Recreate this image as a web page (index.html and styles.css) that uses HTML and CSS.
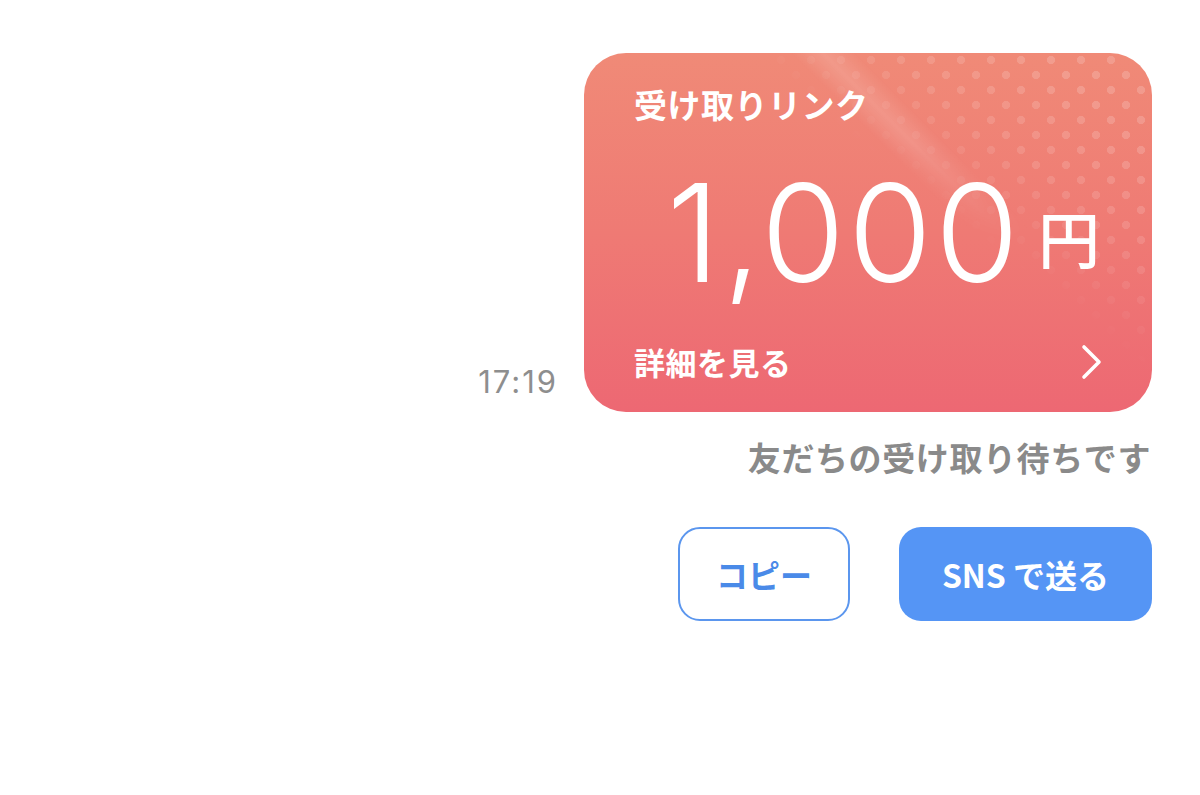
FILE: index.html
```html
<!DOCTYPE html>
<html lang="ja">
<head>
<meta charset="utf-8">
<link rel="stylesheet" href="styles.css">
</head>
<body>
<main class="thread">
  <div class="msg-row">
    <span class="time">17:19</span>
    <div class="card">
      <div class="card-dots"></div>
      <div class="card-shine"></div>
      <div class="card-title">受け取りリンク</div>
      <div class="card-amount">
        <span class="amount-num">1,000</span>
        <span class="amount-unit">円</span>
      </div>
      <div class="card-footer">
        <span class="footer-label">詳細を見る</span>
        <svg class="chevron" width="24" height="36" viewBox="0 0 24 36">
          <polyline points="4,3 19,18 4,33" fill="none" stroke="#fff" stroke-width="3.6" stroke-linecap="round" stroke-linejoin="round"/>
        </svg>
      </div>
    </div>
  </div>
  <div class="status">友だちの受け取り待ちです</div>
  <div class="actions">
    <button class="btn btn-outline">コピー</button>
    <button class="btn btn-fill">SNS で送る</button>
  </div>
</main>
</body>
</html>
```

FILE: styles.css
```css
html, body {
  margin: 0;
  padding: 0;
  background: #ffffff;
}

body {
  width: 1200px;
  height: 795px;
  overflow: hidden;
  font-family: "Noto Sans CJK JP", "Noto Sans", sans-serif;
}

.thread {
  display: flex;
  flex-direction: column;
  align-items: flex-end;
  padding: 53px 48px 0 0;
}

.msg-row {
  display: flex;
  align-items: flex-end;
  gap: 26px;
}

.time {
  font-family: Inter, "Noto Sans", sans-serif;
  font-size: 31px;
  line-height: 1;
  letter-spacing: 2px;
  color: #8e8e8e;
  margin-bottom: 15px;
}

.card {
  position: relative;
  overflow: hidden;
  box-sizing: border-box;
  width: 568px;
  height: 359px;
  border-radius: 42px;
  padding: 31px 49px 30px 50px;
  background: linear-gradient(180deg, #f08a77 0%, #ef7a74 50%, #ed6873 100%);
  display: flex;
  flex-direction: column;
  justify-content: space-between;
  color: #ffffff;
}

.card-dots {
  position: absolute;
  inset: 0;
  background-image:
    radial-gradient(circle, rgba(255,255,255,0.17) 3.8px, transparent 4.4px),
    radial-gradient(circle, rgba(255,255,255,0.17) 3.8px, transparent 4.4px);
  background-size: 30px 30px, 30px 30px;
  background-position: 2px -8px, 17px 7px;
  -webkit-mask-image: linear-gradient(218deg, #000 0%, #000 12%, rgba(0,0,0,0.7) 26%, transparent 40%);
  mask-image: linear-gradient(218deg, #000 0%, #000 12%, rgba(0,0,0,0.7) 26%, transparent 40%);
  pointer-events: none;
}

.card-shine {
  position: absolute;
  inset: 0;
  background: linear-gradient(45deg, transparent 61%, rgba(255,255,255,0.14) 64.5%, transparent 68%);
  -webkit-mask-image: linear-gradient(180deg, #000 0%, #000 25%, transparent 52%);
  mask-image: linear-gradient(180deg, #000 0%, #000 25%, transparent 52%);
  pointer-events: none;
}

.card-title {
  position: relative;
  font-size: 33px;
  font-weight: 700;
  line-height: 40px;
  letter-spacing: 0.5px;
}

.card-amount {
  position: relative;
  display: flex;
  align-items: center;
  justify-content: flex-end;
  gap: 16px;
  padding-right: 3px;
}

.amount-num {
  font-family: Inter, "Noto Sans", sans-serif;
  font-weight: 300;
  font-size: 136px;
  line-height: 1;
  letter-spacing: 3px;
}

.amount-unit {
  font-size: 62px;
  font-weight: 500;
  line-height: 1;
  margin-top: 8px;
}

.card-footer {
  position: relative;
  display: flex;
  align-items: center;
  justify-content: space-between;
  height: 40px;
}

.footer-label {
  font-size: 31px;
  font-weight: 700;
  line-height: 40px;
  letter-spacing: 0.5px;
}

.chevron {
  display: block;
  margin-right: -1px;
}

.status {
  margin-top: 25px;
  margin-right: 1px;
  font-size: 33px;
  font-weight: 700;
  line-height: 40px;
  color: #8a8a8a;
  letter-spacing: 0.6px;
}

.actions {
  display: flex;
  gap: 49px;
  margin-top: 50px;
}

.btn {
  box-sizing: border-box;
  height: 94px;
  border-radius: 22px;
  font-family: "Noto Sans CJK JP", "Noto Sans", sans-serif;
  font-size: 32px;
  font-weight: 700;
  cursor: pointer;
  padding: 0;
}

.btn-outline {
  width: 172px;
  background: #ffffff;
  border: 2.5px solid #5b96ee;
  color: #4a8ae8;
}

.btn-fill {
  width: 253px;
  background: #5595f5;
  border: none;
  color: #ffffff;
}
```
